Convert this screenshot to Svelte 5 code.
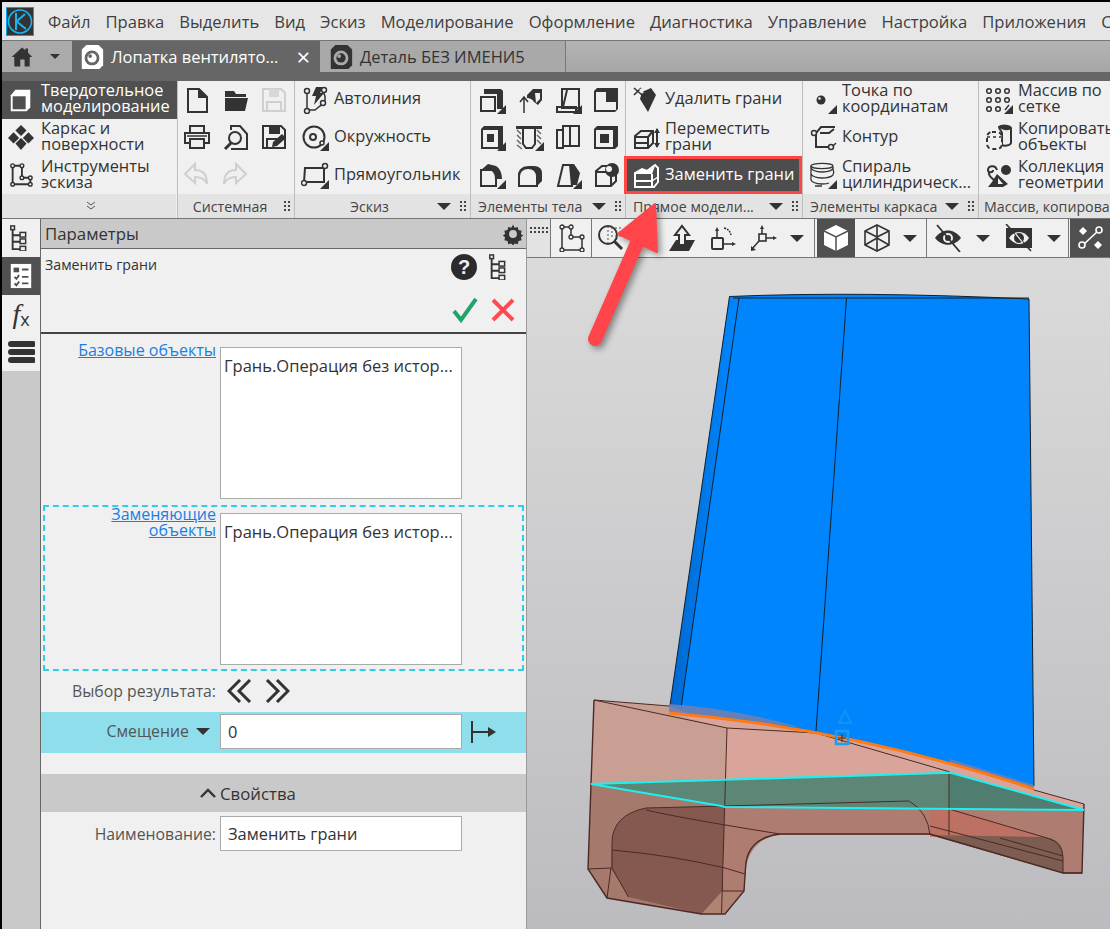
<script>
  const menu = ['Файл', 'Правка', 'Выделить', 'Вид', 'Эскиз', 'Моделирование', 'Оформление', 'Диагностика', 'Управление', 'Настройка', 'Приложения', 'С'];

  const corner = '<path d="M28 28H19l9-9z" fill="#333"/>';
  const s = 'fill="none" stroke="#333" stroke-width="2"';
  const icons = {
    model: '<path d="M3 9l5-6h16v19l-4 4H3z" fill="#fff"/><rect x="5" y="10" width="14" height="14" fill="#505050"/>',
    frame: '<path d="M14 1l6 6-6 6-6-6zM6 9l6 6-6 6-6-6zM22 9l6 6-6 6-6-6zM14 15l6 6-6 7-6-7z" fill="#333"/>',
    sketch: `<path d="M5 4v20h19v-7h-9V4z" ${s}/><g fill="#f0f0f0" stroke="#333" stroke-width="1.5"><circle cx="5" cy="4" r="2"/><circle cx="15" cy="4" r="2"/><circle cx="15" cy="17" r="2"/><circle cx="24" cy="17" r="2"/><circle cx="5" cy="24" r="2"/><circle cx="24" cy="24" r="2"/></g>`,
    newdoc: `<path d="M5 3h11l8 8v15H5z" ${s}/><path d="M15 2l10 10H15z" fill="#333"/>`,
    open: '<path d="M3 5h9l2 3h10v3H3z" fill="#333"/><path d="M3 12h23l-3 13H3z" fill="#333"/>',
    saveoff: '<path d="M3 3h18l4 4v18H3z" fill="none" stroke="#cfcfcf" stroke-width="2"/><path d="M9 3h10v8H9z" fill="#d8d8d8"/><path d="M7 16h14v9H7z" fill="none" stroke="#cfcfcf" stroke-width="2"/>',
    print: `<path d="M7 10V3h14v7M7 24v-8h14v9H7z" ${s}/><path d="M7 20H2V10h24v10h-5" ${s}/><path d="M4 13h20" stroke="#333" stroke-width="1.5"/>`,
    preview: `<path d="M9 7V3h9l7 8v15H9" ${s}/><circle cx="13" cy="15" r="6" fill="#f0f0f0" stroke="#333" stroke-width="2"/><path d="M9 20l-6 6" stroke="#333" stroke-width="3"/>`,
    saveas: `<path d="M3 3h18l4 4v18H3z" ${s}/><path d="M9 3h11v8H9z" fill="#333"/><path d="M7 25v-9h11" ${s}/><path d="M12 24l1-5 9-8 4 4-9 8z" fill="#333"/>`,
    undo: '<path d="M12 3L2 13l10 9v-6c6 0 10 2 12 7 0-9-4-14-12-14z" fill="none" stroke="#cfcfcf" stroke-width="2"/>',
    redo: '<path d="M14 3l10 10-10 9v-6c-6 0-10 2-12 7 0-9 4-14 12-14z" fill="none" stroke="#cfcfcf" stroke-width="2"/>',
    autoline: `<path d="M15 1h7l-3 6h4L13 19l2-9h-4z" fill="#333"/><path d="M6 8v15M22 6c4 6 2 12-3 14l-5 4H8" fill="none" stroke="#333" stroke-width="1.5"/><g fill="#f0f0f0" stroke="#333" stroke-width="1.5"><circle cx="6" cy="5" r="2.5"/><circle cx="23" cy="4" r="2.5"/><circle cx="6" cy="25" r="2.5"/><circle cx="22" cy="17" r="2.5"/></g>`,
    circle: `<circle cx="13" cy="14" r="10.5" ${s}/><circle cx="12" cy="14" r="3" ${s}/><circle cx="21" cy="20" r="2" fill="#f0f0f0" stroke="#333" stroke-width="1.5"/>${corner}`,
    rect: `<path d="M4 7h19v14H3z" ${s}/><circle cx="3" cy="22" r="2.5" fill="#f0f0f0" stroke="#333" stroke-width="1.5"/><circle cx="24" cy="5" r="2.5" fill="#f0f0f0" stroke="#333" stroke-width="1.5"/>${corner}`,
    el1: `<path d="M7 3h16l2 2v18h-6V8H7z" fill="#333"/><path d="M7 8V3M3 11h14v14H3z" ${s}/>${corner}`,
    el2: `<path d="M11 9l6-6h9v11l-4 5-4-3c-2-3-4-4-7-4z" fill="#333"/><path d="M8 27V12M4 16l4-5 4 5" fill="none" stroke="#333" stroke-width="1.5"/><path d="M19 7h5v6l-4 4" fill="#f0f0f0"/>`,
    el3: `<path d="M8 3h17v19H8z" ${s}/><path d="M3 21h19v5H3z" ${s}/><path d="M13 4L9 21" stroke="#333" stroke-width="2"/>${corner}`,
    el4: '<path d="M2 5l3-3h21v21l-3 3H2z" fill="#333"/><path d="M4 6h10v10h10v8H4z" fill="#f0f0f0"/>',
    el5: `<path d="M3 6l3-3h19v20l-3 3H3z" fill="#333"/><path d="M5 7h15v17H5z" fill="#f0f0f0"/><path d="M9 11h7v8H9z" fill="#333"/>${corner}`,
    el6: `<path d="M0 3h26v3H0z" fill="#333"/><path d="M1 7l4 4M1 12l4 4M1 17l4 4M1 22l5 4M21 7l4 4M21 12l4 4M21 17l4 4" stroke="#666" stroke-width="1.5"/><path d="M7 4v17l3 4h6l3-4V4" ${s}/>${corner}`,
    el7: `<path d="M9 3h16v20H9z" ${s}/><path d="M3 7h6v18H3zM16 3v20" ${s}/>`,
    el8: '<path d="M2 6l3-3h21v20l-3 3H2z" fill="#333"/><path d="M4 7h17v17H4z" fill="#f0f0f0"/><path d="M8 11h9v9H8z" fill="#333"/>',
    el9: `<path d="M3 9l7-6 8 2c5 3 6 9 6 13h-6c0-5-2-9-6-9H3z" fill="#333"/><path d="M3 9h11c3 2 4 5 4 9v7H3z" ${s}/>${corner}`,
    el10: `<path d="M2 25V15c0-7 5-10 11-10h5c5 0 8 3 8 7v8l-5 5z" fill="#333"/><path d="M3 25V15c0-5 4-8 9-8 6 0 9 4 9 9v9z" fill="#f0f0f0" stroke="#333" stroke-width="2"/>`,
    el11: `<path d="M10 3h10l6 9-3 12H16z" fill="#333"/><path d="M9 4L4 25h14l-2-21z" fill="#f0f0f0" stroke="#333" stroke-width="2"/>${corner}`,
    el12: `<path d="M4 10l6-5h6v5h8v10l-5 5H4z" fill="none" stroke="#333" stroke-width="2"/><path d="M4 11h15v14" ${s}/><circle cx="20" cy="9" r="7" fill="#333"/><circle cx="17" cy="8" r="3" fill="#f0f0f0"/>`,
    del: '<path d="M2 2l8 7M9 2L2 9" stroke="#333" stroke-width="1.6"/><path d="M10 6l9-4 5 7-8 17-8-13z" fill="#333"/><path d="M8 3l3 4" stroke="#f0f0f0" stroke-width="2"/>',
    move: `<path d="M3 13l6-5h12v12l-5 5H3z" ${s}/><path d="M3 14h13v11M16 14l5-6M3 20h13" fill="none" stroke="#333" stroke-width="2"/><path d="M25 6v18" stroke="#333" stroke-width="2"/><path d="M22 10l3-5 3 5zM22 20l3 5 3-5z" fill="#333"/>`,
    replace: '<path d="M3 12l7-4 5 2 8-6 3 3v14l-4 5H3z" fill="none" stroke="#fff" stroke-width="2"/><path d="M4 12l7-4 4 3 8-6-3 8H4z" fill="#fff"/><path d="M3 20h17M20 13v12" stroke="#fff" stroke-width="2"/><path d="M20 20l6-4" stroke="#fff" stroke-width="1.5"/>',
    point: `<circle cx="12" cy="14" r="4.5" fill="#333"/><circle cx="10.5" cy="12.5" r="1.3" fill="#f0f0f0"/>${corner}`,
    contour: `<path d="M26 4H12l-5 6v14h15" ${s}/><path d="M11 10h9l5-4" ${s}/><circle cx="5" cy="10" r="2.5" fill="#f0f0f0" stroke="#333" stroke-width="1.5"/><circle cx="22" cy="24" r="2.5" fill="#f0f0f0" stroke="#333" stroke-width="1.5"/><path d="M24 23l3-3" stroke="#333" stroke-width="1.5"/>`,
    spiral: `<g fill="none" stroke="#333" stroke-width="1.3"><ellipse cx="13" cy="5" rx="11" ry="2.6"/><path d="M2 5c-1 4 5 6 11 6 7 0 12-2 11-5M2 11c-1 4 5 6 11 6 5 0 9-1 11-3M24 8c1 2 1 4 0 6M2 11V6M2 17c-1 4 5 6 11 6 3 0 5 0 7-1M2 17v-5M6 25h7"/></g>${corner}`,
    array: `<g fill="none" stroke="#333" stroke-width="1.5"><circle cx="4" cy="5" r="2.3"/><circle cx="13" cy="5" r="2.3"/><circle cx="22" cy="5" r="2.3"/><circle cx="4" cy="14" r="2.3"/><circle cx="13" cy="14" r="2.3"/><circle cx="22" cy="14" r="2.3"/><circle cx="4" cy="23" r="2.3"/><circle cx="13" cy="23" r="2.3"/></g><path d="M20 24l4-5" stroke="#333" stroke-width="1.5"/>${corner}`,
    copyobj: '<path d="M14 4c2-2 11-2 12 1v15c-1 3-7 3-9 2V10c-1-3-3-4-3-6z" fill="none" stroke="#333" stroke-width="2"/><path d="M14 4c2-2 11-2 12 1s-10 3-12-1z" fill="#333"/><rect x="2" y="9" width="15" height="17" rx="5" fill="#f0f0f0" stroke="#333" stroke-width="2" stroke-dasharray="4 3"/><path d="M2 14h15" stroke="#333" stroke-width="1.5" stroke-dasharray="3 3"/>',
    collect: '<circle cx="21" cy="9" r="5" fill="#333"/><path d="M12 9c-2-6-9-4-9 0 0 3 5 3 5 0M4 11c-1 4 3 6 5 8" fill="none" stroke="#333" stroke-width="2"/><path d="M12 13l11 10-5 3H3l4-5z" fill="#333"/><path d="M13 17l5 6h-5z" fill="#f0f0f0"/>',
    tree: '<path d="M5 4v22h8M5 11h8M5 18h8" fill="none" stroke="#333" stroke-width="2"/><g fill="#f0f0f0" stroke="#333" stroke-width="1.6"><rect x="3" y="1" width="4" height="4"/><rect x="13" y="8" width="6" height="5"/><rect x="13" y="15" width="6" height="5"/><rect x="13" y="23" width="6" height="5"/></g>',
    form: '<rect x="3" y="1" width="22" height="26" fill="#fff"/><rect x="6" y="5" width="6" height="5" fill="#505050"/><path d="M15 7h7M7 15l2 2 3-4M15 15h7M7 22l2 2 3-4M15 22h7" fill="none" stroke="#505050" stroke-width="2"/>',
    burger: '<path d="M4 6h22M4 14h22M4 22h22" stroke="#333" stroke-width="6" stroke-linecap="round"/>',
    gear: '<path d="M14 2l2 4 4-1 1 4 4 1-1 4 3 2-3 2 1 4-4 1-1 4-4-1-2 3-2-3-4 1-1-4-4-1 1-4-3-2 3-2-1-4 4-1 1-4 4 1z" fill="#333"/><circle cx="14" cy="14" r="5" fill="#c9c9c9"/>',
    sk2: `<path d="M5 3v23h20V13H14V3z" fill="none" stroke="#333" stroke-width="1.5"/><g fill="#f0f0f0" stroke="#333" stroke-width="1.3"><circle cx="5" cy="3" r="2"/><circle cx="14" cy="3" r="2"/><circle cx="14" cy="13" r="2"/><circle cx="25" cy="13" r="2"/><circle cx="5" cy="26" r="2"/><circle cx="25" cy="26" r="2"/></g>`,
    zoomv: '<circle cx="11" cy="11" r="9" fill="none" stroke="#333" stroke-width="2"/><path d="M11 2v18M14 4h12M14 8h12M14 12h10" stroke="#555" stroke-dasharray="2 2"/><path d="M17 17l8 8" stroke="#333" stroke-width="3"/>',
    normal: '<path d="M8 16L1 27h20l6-11z" fill="#333"/><path d="M11 21V11H7l7-9 7 9h-4v10z" fill="#f0f0f0" stroke="#333" stroke-width="2"/>',
    lcs: '<rect x="4" y="14" width="11" height="11" rx="1" fill="none" stroke="#333" stroke-width="2"/><path d="M9 14V5M15 20h10" stroke="#333" stroke-width="1.5"/><path d="M7 7l2-4 2 4zM24 18l4 2-4 2z" fill="#333"/><path d="M16 4c4 1 6 3 7 7" fill="none" stroke="#333" stroke-width="1.5" stroke-dasharray="2 1"/>',
    axes: '<rect x="10" y="10" width="7" height="7" fill="#f0f0f0" stroke="#333" stroke-width="1.6"/><path d="M13 10V3M17 14h9M10 17l-7 8" stroke="#333" stroke-width="1.5"/><path d="M11 5l2-4 2 4zM24 12l4 2-4 2zM2 22l0 5 5-1z" fill="#333"/>',
    solid: '<path d="M14 1l12 6v14l-12 6-12-6V7z" fill="#fff"/><path d="M2 7l12 6 12-6M14 13v14" stroke="#505050" stroke-width="1.5" fill="none"/>',
    wire: '<g fill="none" stroke="#333" stroke-width="1.6"><path d="M14 1l12 6v14l-12 6-12-6V7z"/><path d="M2 7l12 6 12-6M14 13v14M14 1v13M2 21l12-7 12 7"/></g>',
    eyeoff: '<path d="M1 14c7-10 19-10 26 0-7 9-19 9-26 0z" fill="#333"/><circle cx="14" cy="14" r="5" fill="#f0f0f0"/><circle cx="14" cy="14" r="3" fill="#333"/><path d="M3 1l23 27" stroke="#333" stroke-width="1.8"/>',
    eyebox: '<rect x="1" y="4" width="26" height="20" fill="#333"/><path d="M4 14c6-8 15-8 20 0-5 8-14 8-20 0z" fill="#f0f0f0"/><circle cx="14" cy="14" r="5" fill="#333"/><path d="M1 0l25 27" stroke="#333" stroke-width="1.6"/><path d="M10 9l8 10" stroke="#f0f0f0" stroke-width="1.2"/>',
    nodes: '<path d="M7 21L22 7" stroke="#fff" stroke-width="1.6"/><circle cx="6" cy="21" r="3" fill="#505050" stroke="#fff" stroke-width="1.6"/><circle cx="23" cy="6" r="3" fill="#505050" stroke="#fff" stroke-width="1.6"/><path d="M7 3l4 4-4 4-4-4zM22 17l4 4-4 4-4-4z" fill="#fff"/>',
    tabfile: '<path d="M3 6l5-5h13l5 5v17l-4 4H3z" fill="currentColor"/><circle cx="14" cy="15" r="8" fill="var(--hole)"/><circle cx="14" cy="15" r="5" fill="currentColor"/><circle cx="12" cy="13" r="2" fill="var(--hole)"/>',
    home: '<path d="M14 3L2 14h3v11h7v-8h5v8h6V14h3l-5-5V4h-3v2z" fill="#333"/>'
  };

  const systemTools = ['newdoc', 'open', 'saveoff', 'print', 'preview', 'saveas', 'undo', 'redo'];
  const bodyTools = ['el1', 'el2', 'el3', 'el4', 'el5', 'el6', 'el7', 'el8', 'el9', 'el10', 'el11', 'el12'];
  const sketchRows = [
    { icon: 'autoline', text: 'Автолиния' },
    { icon: 'circle', text: 'Окружность' },
    { icon: 'rect', text: 'Прямоугольник' }
  ];
  const directRows = [
    { icon: 'del', text: 'Удалить грани' },
    { icon: 'move', text: 'Переместить грани' },
    { icon: 'replace', text: 'Заменить грани', active: true }
  ];
  const wireRows = [
    { icon: 'point', text: 'Точка по координатам' },
    { icon: 'contour', text: 'Контур' },
    { icon: 'spiral', text: 'Спираль цилиндрическ...' }
  ];
  const arrayRows = [
    { icon: 'array', text: 'Массив по сетке' },
    { icon: 'copyobj', text: 'Копировать объекты' },
    { icon: 'collect', text: 'Коллекция геометрии' }
  ];
</script>

{#snippet ico(name, size = 28)}
  <svg class="ico" width={size} height={size} viewBox="0 0 28 28">{@html icons[name]}</svg>
{/snippet}

{#snippet caret()}
  <span class="caret"></span>
{/snippet}

{#snippet grip()}
  <span class="grip"></span>
{/snippet}

{#snippet toolRows(rows)}
  <div class="rows">
    {#each rows as row}
      <div class="row" class:active={row.active}>
        {@render ico(row.icon)}
        <span class="row-text">{row.text}</span>
      </div>
    {/each}
  </div>
{/snippet}

<div class="app">
  <div class="menubar">
    <svg class="logo" width="28" height="29" viewBox="0 0 28 29">
      <rect x="0.5" y="0.5" width="27" height="28" fill="#333" stroke="#00a5e8" />
      <circle cx="14" cy="14.5" r="11.5" fill="none" stroke="#19b5f1" stroke-width="1.6" />
      <path d="M10 6v17M10 15L19 7M10 14l10 8" fill="none" stroke="#19b5f1" stroke-width="2" />
    </svg>
    <div class="menu-items">
      {#each menu as item}<span>{item}</span>{/each}
    </div>
  </div>

  <div class="tabs">
    <div class="tab-home">
      {@render ico('home', 24)}
      <span class="caret small"></span>
    </div>
    <div class="tab tab-active">
      <svg class="tabicon white" width="26" height="26" viewBox="0 0 28 28">{@html icons.tabfile}</svg>
      <span class="tab-title">Лопатка вентилято...</span>
      <span class="tab-close">×</span>
    </div>
    <div class="tab tab-other">
      <svg class="tabicon dark" width="26" height="26" viewBox="0 0 28 28">{@html icons.tabfile}</svg>
      <span class="tab-title">Деталь БЕЗ ИМЕНИ5</span>
    </div>
  </div>
  <div class="tabs-strip"></div>

  <div class="ribbon">
    <section class="sec sec-nav">
      <div class="nav-list">
        <div class="nav-item current">{@render ico('model', 26)}<span>Твердотельное моделирование</span></div>
        <div class="nav-item">{@render ico('frame', 26)}<span>Каркас и поверхности</span></div>
        <div class="nav-item">{@render ico('sketch', 26)}<span>Инструменты эскиза</span></div>
      </div>
      <div class="sec-label center">
        <svg width="10" height="10" viewBox="0 0 10 10"><path d="M1 1l4 3 4-3M1 5l4 3 4-3" fill="none" stroke="#555" /></svg>
      </div>
    </section>

    <section class="sec sec-system">
      <div class="grid-3">
        {#each systemTools as t}<div class="cell">{@render ico(t)}</div>{/each}
      </div>
      <div class="sec-label"><span class="lbl mid">Системная</span>{@render grip()}</div>
    </section>

    <section class="sec sec-sketch">
      {@render toolRows(sketchRows)}
      <div class="sec-label"><span class="lbl mid">Эскиз</span>{@render caret()}{@render grip()}</div>
    </section>

    <section class="sec sec-body">
      <div class="grid-4">
        {#each bodyTools as t}<div class="cell">{@render ico(t)}</div>{/each}
      </div>
      <div class="sec-label"><span class="lbl">Элементы тела</span>{@render caret()}{@render grip()}</div>
    </section>

    <section class="sec sec-direct">
      {@render toolRows(directRows)}
      <div class="sec-label"><span class="lbl">Прямое модели...</span>{@render caret()}{@render grip()}</div>
    </section>

    <section class="sec sec-wire">
      {@render toolRows(wireRows)}
      <div class="sec-label"><span class="lbl">Элементы каркаса</span>{@render caret()}{@render grip()}</div>
    </section>

    <section class="sec sec-array">
      {@render toolRows(arrayRows)}
      <div class="sec-label"><span class="lbl nowrap">Массив, копирование</span></div>
    </section>
  </div>

  <div class="work">
    <aside class="rail">
      <div class="rail-tab">{@render ico('tree', 26)}</div>
      <div class="rail-tab current">{@render ico('form', 26)}</div>
      <div class="rail-tab fx"><i>f</i><span>x</span></div>
      <div class="rail-tab">{@render ico('burger', 28)}</div>
    </aside>

    <div class="panel">
      <div class="panel-head">
        <span>Параметры</span>
        {@render ico('gear', 22)}
      </div>
      <div class="panel-sub">
        <span class="sub-title">Заменить грани</span>
        <div class="sub-tools">
          <div class="sub-line">
            <span class="help">?</span>
            {@render ico('tree', 26)}
          </div>
          <div class="sub-line">
            <svg width="28" height="28" viewBox="0 0 28 28"><path d="M3 15l7 9L25 3" fill="none" stroke="#1fa56b" stroke-width="4" /></svg>
            <svg width="28" height="28" viewBox="0 0 28 28"><path d="M4 4l20 20M24 4L4 24" fill="none" stroke="#ff4a4f" stroke-width="4" /></svg>
          </div>
        </div>
      </div>

      <div class="form">
        <div class="pick first">
          <a class="link" href="#base">Базовые объекты</a>
          <div class="listbox">Грань.Операция без истор...</div>
        </div>

        <div class="dashed">
          <div class="pick">
            <a class="link wrap" href="#repl">Заменяющие объекты</a>
            <div class="listbox">Грань.Операция без истор...</div>
          </div>
        </div>

        <div class="choice">
          <span class="label">Выбор результата:</span>
          <svg width="26" height="24" viewBox="0 0 26 24"><path d="M13 1L2 12l11 11M23 1L12 12l11 11" fill="none" stroke="#333" stroke-width="3" /></svg>
          <svg width="26" height="24" viewBox="0 0 26 24"><path d="M3 1l11 11L3 23M13 1l11 11-11 11" fill="none" stroke="#333" stroke-width="3" /></svg>
        </div>

        <div class="offset">
          <span class="label">Смещение <span class="caret"></span></span>
          <div class="input">0</div>
          <svg class="dir" width="28" height="24" viewBox="0 0 28 24"><path d="M2 1v22M2 12h22" fill="none" stroke="#333" stroke-width="2" /><path d="M18 7l8 5-8 5z" fill="#333" /></svg>
        </div>

        <div class="props-head">
          <svg width="16" height="10" viewBox="0 0 16 10"><path d="M1 9l7-7 7 7" fill="none" stroke="#333" stroke-width="2.4" /></svg>
          <span>Свойства</span>
        </div>

        <div class="name-row">
          <span class="label">Наименование:</span>
          <div class="input">Заменить грани</div>
        </div>
      </div>
    </div>

    <div class="view">
      <div class="viewbar">
        <span class="vb-grip">
          <svg width="18" height="6" viewBox="0 0 18 6"><path d="M0 0h2v2H0zM4 0h2v2H4zM8 0h2v2H8zM12 0h2v2h-2zM16 0h2v2h-2zM0 4h2v2H0zM4 4h2v2H4zM8 4h2v2H8zM12 4h2v2h-2zM16 4h2v2h-2z" fill="#444" /></svg>
        </span>
        <div class="vb-cell sep">{@render ico('sk2')}</div>
        <div class="vb-group first">
          <div class="vb-cell">{@render ico('zoomv')}</div>
          <div class="vb-cell push">{@render ico('normal')}</div>
          <div class="vb-cell nudge2">{@render ico('lcs')}</div>
          <div class="vb-cell nudge3">{@render ico('axes')}</div>
          {@render caret()}
        </div>
        <div class="vb-group second">
          <div class="vb-cell solid">{@render ico('solid')}</div>
          <div class="vb-cell nudge3">{@render ico('wire')}</div>
          {@render caret()}
        </div>
        <div class="vb-group third">
          <div class="vb-cell">{@render ico('eyeoff')}</div>
          {@render caret()}
          <div class="vb-cell">{@render ico('eyebox')}</div>
          {@render caret()}
        </div>
        <div class="vb-cell solid last">{@render ico('nodes')}</div>
      </div>

      <svg class="model" viewBox="527 258 583 671" width="583" height="671">
        <defs>
          <linearGradient id="edge" x1="0" y1="0" x2="1" y2="0">
            <stop offset="0" stop-color="#0068d0" />
            <stop offset="1" stop-color="#0088ff" />
          </linearGradient>
        </defs>

        <!-- blade -->
        <path d="M729.5 296.5Q860 291 1029 299L1034 790Q850 728 669 713Z" fill="#0085fd" />
        <path d="M729.5 296.5L739 299L681 708L669 713Z" fill="url(#edge)" />
        <path d="M733 298H1029M739 298L681 708M846.5 298L816 731M729.5 296.5Q860 291 1029 299M1029 299L1034 786M729.5 296.5L669 712" fill="none" stroke="#102030" stroke-width="1" />

        <!-- base -->
        <path d="M594 700L669 706L727 728L725 808L591 784Z" fill="#c99f93" />
        <path d="M669 713Q850 728 1034 790L1084 804V812L725 808L727 728Z" fill="#d9a59b" />
        <path d="M591 784L721.5 806L725 914H701.5L607 898L588 869Z" fill="#a57a6c" />
        <path d="M612 843Q612 815 646 808L725 806L722.5 891L701.5 914L628.5 897L611 868Z" fill="#85594f" />
        <path d="M724 806L1084 810L1082 873H1063L930 835H780Q752 838 746 867L744 891L724 914Z" fill="#ae7c70" />
        <path d="M930 808L949 809L1042 837H930Z" fill="#c0705f" opacity="0.85" />
        <path d="M930 835L1042 837Q1063 838 1063 856V873Z" fill="#7d5c52" />
        <path d="M701.5 914L725 914L744 891L722.5 891Z" fill="#b08375" />

        <path d="M591 784L950.5 772.7L1084 810L725 806Z" fill="#5d8676" />
        <path d="M950.5 772.7L1084 810L949 808Z" fill="#4f7e70" />
        <path d="M669 704Q730 708 800 727L742 722L669 713ZM950 759L1034 785V790L950 763Z" fill="#6e7fb4" opacity="0.9" />

        <g fill="none" stroke="#4b2a25" stroke-width="1">
          <path d="M594 700L588 869L607 898L701.5 914H725L744 891L745.6 867Q747 838 780 834H930L1063 873H1082L1084 804" stroke-width="1.4" />
          <path d="M594 700L727 728M594 700L669 706M727 728L816 733L950 772M727 728L721.5 914M1084 804L1034 790" />
          <path d="M612 843Q612 815 646 808L725 806M612 843V868L628.5 897M607 898L611 868L588 869M612 850Q670 855 725 868M725 868L745 874M722 891H744" />
          <path d="M646 810Q680 818 780 834M949 773V835M930 835Q928 812 909 801L725 806M949 809L1047 838Q1063 842 1063 858V873M930 826L1063 861" />
          <path d="M1063 873L1082 873M1000 838L1063 856" />
        </g>

        <path d="M669 713Q850 728 1034 789" fill="none" stroke="#ff7a14" stroke-width="3" />
        <path d="M591 784L721.5 806L725 807L1084 810L950.5 772.7L591 784" fill="none" stroke="#1cf0f0" stroke-width="2" />

        <g fill="none" stroke="#1c9cf0">
          <path d="M845 711L851 723H839Z" stroke-width="2" opacity="0.6" />
          <rect x="836" y="731" width="12" height="13" stroke-width="2.5" />
        </g>
        <path d="M838 738h8M842 734v8" stroke="#333" />
      </svg>
    </div>
  </div>

  <svg class="arrow" width="90" height="160" viewBox="585 195 90 160">
    <path d="M595 339L637 243" fill="none" stroke="#ff454a" stroke-width="14" stroke-linecap="round" />
    <path d="M655 204L618 234L657 252Z" fill="#ff454a" stroke="#ff454a" stroke-width="2" stroke-linejoin="round" />
  </svg>
</div>

<style>
  :global(body) {
    margin: 0;
    background: #000;
  }

  .app {
    position: relative;
    width: 1110px;
    height: 929px;
    box-sizing: border-box;
    padding: 2px 0 0 2px;
    background: #000;
    overflow: hidden;
    font-family: "Open Sans", "Noto Sans", sans-serif;
    color: #333;
    display: flex;
    flex-direction: column;
  }

  .ico {
    display: block;
    flex: none;
  }

  .menubar {
    height: 38px;
    background: #e6e6e6;
    display: flex;
    align-items: center;
    padding-left: 4px;
    flex: none;
    border-bottom: 1px solid #777;
  }

  .logo {
    margin-right: 14px;
    flex: none;
  }

  .menu-items {
    display: flex;
    gap: 15px;
    font-size: 16.6px;
    color: #404040;
    white-space: nowrap;
  }

  .tabs {
    height: 31px;
    background: linear-gradient(#b4b4b4, #a6a6a6);
    display: flex;
    flex: none;
  }

  .tabs-strip {
    height: 9px;
    background: #666;
    flex: none;
  }

  .tab-home {
    width: 70px;
    display: flex;
    align-items: center;
    padding-left: 8px;
    box-sizing: border-box;
    gap: 16px;
    background: #aaa;
  }

  .tab {
    display: flex;
    align-items: center;
    font-size: 16.5px;
    white-space: nowrap;
    box-sizing: border-box;
  }

  .tab-active {
    width: 247px;
    padding-left: 7px;
    background: #666;
    color: #fff;
  }

  .tab-other {
    width: 247px;
    padding-left: 8px;
    border-left: 1px solid #666;
    border-right: 1px solid #777;
    background: #a9a9a9;
    color: #333;
  }

  .tabicon {
    margin-right: 6px;
    flex: none;
  }

  .tabicon.white {
    color: #fff;
    --hole: #666;
  }

  .tabicon.dark {
    color: #333;
    --hole: #a9a9a9;
  }

  .tab-close {
    font-size: 24px;
    line-height: 1;
    margin-left: 18px;
  }

  .caret {
    display: inline-block;
    width: 0;
    height: 0;
    border-left: 7px solid transparent;
    border-right: 7px solid transparent;
    border-top: 7px solid #333;
    flex: none;
  }

  .caret.small {
    border-left-width: 5px;
    border-right-width: 5px;
    border-top-width: 5px;
  }

  .grip {
    width: 7px;
    height: 13px;
    flex: none;
    margin-left: 8px;
    background-image: radial-gradient(circle, #444 1px, transparent 1.2px);
    background-size: 4px 4px;
  }

  .ribbon {
    height: 138px;
    display: flex;
    flex: none;
    background: #f0f0f0;
    border-bottom: 1px solid #777;
    box-sizing: border-box;
  }

  .sec {
    display: flex;
    flex-direction: column;
    border-right: 1px solid #bdbdbd;
    box-sizing: border-box;
    flex: none;
    min-width: 0;
  }

  .sec-nav { width: 176px; }
  .sec-system { width: 117px; }
  .sec-sketch { width: 176px; }
  .sec-body { width: 155px; }
  .sec-direct { width: 177px; }
  .sec-wire { width: 176px; }
  .sec-array { flex: 1; border-right: 0; overflow: hidden; }

  .sec-label {
    height: 24px;
    flex: none;
    background: #e3e3e3;
    display: flex;
    align-items: center;
    font-size: 14.2px;
    color: #444;
    padding: 0 4px 0 7px;
    white-space: nowrap;
    box-sizing: border-box;
  }

  .sec-array .sec-label {
    padding-left: 5px;
  }

  .sec-label.center {
    justify-content: center;
    margin-right: 1px;
  }

  .lbl {
    flex: 1;
    overflow: hidden;
  }

  .lbl.mid {
    text-align: center;
  }

  .lbl.nowrap {
    overflow: visible;
  }

  .nav-list,
  .rows,
  .grid-3,
  .grid-4 {
    height: 113px;
    flex: none;
  }

  .nav-list {
    display: grid;
    grid-template-rows: repeat(3, 1fr);
  }

  .nav-item {
    display: flex;
    align-items: center;
    gap: 7px;
    padding-left: 6px;
    font-size: 16.4px;
    line-height: 16px;
  }

  .nav-item span {
    padding-bottom: 3px;
  }

  .nav-item.current {
    background: #505050;
    color: #fff;
  }

  .grid-3 {
    display: grid;
    grid-template-columns: repeat(3, 38.5px);
    grid-template-rows: repeat(3, 1fr);
  }

  .grid-4 {
    display: grid;
    grid-template-columns: repeat(4, 38px);
    grid-template-rows: repeat(3, 1fr);
    padding-left: 2px;
  }

  .cell {
    display: flex;
    align-items: center;
    justify-content: center;
  }

  .rows {
    display: grid;
    grid-template-rows: repeat(3, 1fr);
  }

  .row {
    display: flex;
    align-items: center;
    gap: 5px;
    padding-left: 6px;
    font-size: 16.4px;
    line-height: 16px;
    min-width: 0;
  }

  .row-text {
    min-width: 0;
    padding-bottom: 3px;
  }

  .sec-array .row {
    white-space: nowrap;
  }

  .sec-array .row-text {
    white-space: normal;
    min-width: 110px;
  }

  .row.active {
    background: #4d4d4d;
    color: #fff;
    outline: 3px solid #ff4646;
    outline-offset: -3px;
    margin-left: -2px;
    padding-left: 8px;
  }

  .work {
    flex: 1;
    display: flex;
    min-height: 0;
  }

  .rail {
    width: 38px;
    flex: none;
    background: #c9c9c9;
    border-right: 1px solid #666;
  }

  .rail-tab {
    height: 38px;
    background: #f0f0f0;
    display: flex;
    align-items: center;
    justify-content: center;
  }

  .rail-tab.current {
    background: #505050;
  }

  .fx {
    font-family: "Liberation Serif", serif;
    font-size: 28px;
    color: #333;
    line-height: 1;
  }

  .fx span {
    font-family: "Open Sans", sans-serif;
    font-size: 18px;
    margin-top: 10px;
  }

  .panel {
    width: 485px;
    flex: none;
    background: #f0f0f0;
    border-right: 1px solid #999;
    display: flex;
    flex-direction: column;
  }

  .panel-head {
    height: 29px;
    background: #c9c9c9;
    border-bottom: 1px solid #666;
    flex: none;
    display: flex;
    align-items: center;
    justify-content: space-between;
    padding: 0 2px 0 4px;
    font-size: 16.8px;
  }

  .panel-sub {
    height: 85px;
    flex: none;
    box-sizing: border-box;
    border-bottom: 2px solid #444;
    display: flex;
    justify-content: space-between;
    padding: 4px 9px 0 4px;
    font-size: 14.2px;
  }

  .sub-title {
    margin-top: 2px;
  }

  .sub-tools {
    display: flex;
    flex-direction: column;
    gap: 15px;
    width: 66px;
  }

  .sub-line {
    display: flex;
    align-items: center;
    gap: 10px;
    height: 28px;
  }

  .help {
    width: 26px;
    height: 26px;
    border-radius: 50%;
    background: #2b2b2b;
    color: #f0f0f0;
    font-weight: 700;
    font-size: 20px;
    line-height: 26px;
    text-align: center;
    font-family: "Liberation Sans", sans-serif;
  }

  .form {
    flex: 1;
    font-size: 15px;
  }

  .pick {
    display: grid;
    grid-template-columns: 175px 242px;
    gap: 4px;
    align-items: start;
  }

  .pick.first {
    margin-top: 13px;
  }

  .link {
    color: #1a7fe0;
    text-align: right;
    line-height: 16px;
    font-size: 16px;
    white-space: nowrap;
    margin-top: -5px;
  }

  .link.wrap {
    white-space: normal;
    justify-self: end;
    width: 110px;
    margin-top: -7px;
  }

  .listbox {
    height: 152px;
    box-sizing: border-box;
    background: #fff;
    border: 1px solid #aaa;
    padding: 6px 0 0 3px;
    font-size: 16.5px;
    white-space: nowrap;
    overflow: hidden;
  }

  .dashed {
    margin: 6px 2px 0 2px;
    height: 166px;
    box-sizing: border-box;
    border: 2px dashed #2fd0e6;
    padding-top: 6px;
  }

  .dashed .pick {
    grid-template-columns: 171px 242px;
  }

  .choice {
    margin-top: 8px;
    height: 24px;
    display: grid;
    grid-template-columns: 175px 26px 26px;
    column-gap: 11px;
    align-items: center;
  }

  .label {
    text-align: right;
    color: #555;
    font-size: 15.8px;
    white-space: nowrap;
  }

  .offset {
    margin-top: 9px;
    height: 41px;
    background: #8fdeeb;
    display: grid;
    grid-template-columns: 175px 242px 28px;
    column-gap: 4px;
    align-items: start;
    padding-top: 2px;
    box-sizing: border-box;
  }

  .offset .label {
    padding: 6px 6px 0 0;
  }

  .offset .caret {
    margin-left: 3px;
    vertical-align: 2px;
  }

  .offset .dir {
    margin: 6px 0 0 4px;
  }

  .input {
    height: 35px;
    box-sizing: border-box;
    background: #fff;
    border: 1px solid #aaa;
    font-size: 16.4px;
    line-height: 33px;
    padding-left: 7px;
  }

  .props-head {
    margin-top: 21px;
    height: 38px;
    background: #c9c9c9;
    display: flex;
    align-items: center;
    gap: 4px;
    padding-left: 159px;
    font-size: 16.8px;
  }

  .name-row {
    margin-top: 4px;
    display: grid;
    grid-template-columns: 175px 242px;
    column-gap: 4px;
    align-items: center;
  }

  .view {
    flex: 1;
    position: relative;
    min-width: 0;
    background: linear-gradient(#dcdcdc, #bcbcc0);
  }

  .viewbar {
    height: 39px;
    box-sizing: border-box;
    background: #f0f0f0;
    border-bottom: 1px solid #777;
    display: flex;
    align-items: center;
  }

  .vb-grip {
    width: 23px;
    height: 38px;
    flex: none;
    background: #e3e3e3;
    box-sizing: border-box;
    padding: 8px 0 0 3px;
  }

  .vb-grip svg {
    display: block;
  }

  .vb-cell {
    width: 38px;
    height: 38px;
    flex: none;
    display: flex;
    align-items: center;
    justify-content: center;
  }

  .vb-cell.sep {
    width: 42px;
    border-left: 1px solid #777;
    border-right: 1px solid #777;
    box-sizing: border-box;
  }

  .vb-cell.push {
    margin-left: 33px;
  }

  .vb-cell.nudge2 {
    margin-left: 2px;
  }

  .vb-cell.nudge3 {
    margin-left: 3px;
  }

  .vb-group {
    display: flex;
    align-items: center;
    flex: none;
    box-sizing: border-box;
    border-right: 1px solid #777;
    height: 38px;
  }

  .vb-group.first {
    width: 223px;
  }

  .vb-group.first .caret {
    margin-left: 8px;
  }

  .vb-group.second {
    width: 112px;
    padding-left: 2px;
  }

  .vb-group.second .caret {
    margin-left: 7px;
  }

  .vb-group.third {
    width: 142px;
    padding-left: 2px;
  }

  .vb-group.third .caret {
    margin: 0 10px 0 9px;
  }

  .solid {
    background: #505050;
  }

  .last {
    flex: 1;
    margin-left: 1px;
  }

  .model {
    position: absolute;
    left: 0;
    top: 39px;
  }

  .arrow {
    position: absolute;
    left: 585px;
    top: 195px;
    filter: drop-shadow(3px 3px 3px rgba(0, 0, 0, 0.4));
    overflow: visible;
  }
</style>
